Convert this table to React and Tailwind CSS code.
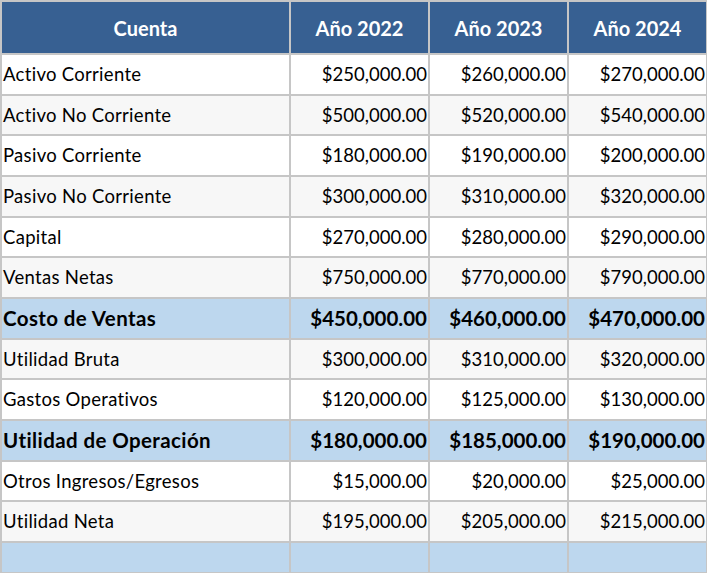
import React from "react";

const rows = [
  ["Activo Corriente", "$250,000.00", "$260,000.00", "$270,000.00"],
  ["Activo No Corriente", "$500,000.00", "$520,000.00", "$540,000.00"],
  ["Pasivo Corriente", "$180,000.00", "$190,000.00", "$200,000.00"],
  ["Pasivo No Corriente", "$300,000.00", "$310,000.00", "$320,000.00"],
  ["Capital", "$270,000.00", "$280,000.00", "$290,000.00"],
  ["Ventas Netas", "$750,000.00", "$770,000.00", "$790,000.00"],
  ["Costo de Ventas", "$450,000.00", "$460,000.00", "$470,000.00", true],
  ["Utilidad Bruta", "$300,000.00", "$310,000.00", "$320,000.00"],
  ["Gastos Operativos", "$120,000.00", "$125,000.00", "$130,000.00"],
  ["Utilidad de Operación", "$180,000.00", "$185,000.00", "$190,000.00", true],
  ["Otros Ingresos/Egresos", "$15,000.00", "$20,000.00", "$25,000.00"],
  ["Utilidad Neta", "$195,000.00", "$205,000.00", "$215,000.00"],
];

const App = () => {
  return (
    <div className="bg-white font-['Lato',sans-serif] text-black">
      <table className="w-[707px] border-collapse table-fixed">
        <colgroup>
          <col className="w-[289px]" />
          <col className="w-[139px]" />
          <col className="w-[139px]" />
          <col className="w-[139px]" />
        </colgroup>
        <thead>
          <tr className="h-[53px] bg-[#376092] text-white text-[20px] font-bold">
            <th className="border-2 border-[#c6c6c6] text-center">Cuenta</th>
            <th className="border-2 border-[#c6c6c6] text-center">Año 2022</th>
            <th className="border-2 border-[#c6c6c6] text-center">Año 2023</th>
            <th className="border-2 border-[#c6c6c6] text-center">Año 2024</th>
          </tr>
        </thead>
        <tbody>
          {rows.map(([name, a, b, c, bold], i) => (
            <tr
              key={name}
              className={
                bold
                  ? "h-[40.67px] bg-[#bdd7ee] text-[20.5px] font-bold"
                  : i % 2 === 1
                  ? "h-[40.67px] bg-[#f7f7f7] text-[18.5px]"
                  : "h-[40.67px] bg-white text-[18.5px]"
              }
            >
              <td
                className={
                  bold
                    ? "border-2 border-[#c6c6c6] pl-[1px] pt-[1px] text-left whitespace-nowrap tracking-[0.4px]"
                    : "border-2 border-[#c6c6c6] pl-[1px] pt-[1px] text-left whitespace-nowrap tracking-[0.3px]"
                }
              >
                {name}
              </td>
              <td className="border-2 border-[#c6c6c6] pr-[1px] pt-[1px] text-right whitespace-nowrap">{a}</td>
              <td className="border-2 border-[#c6c6c6] pr-[1px] pt-[1px] text-right whitespace-nowrap">{b}</td>
              <td className="border-2 border-[#c6c6c6] pr-[1px] pt-[1px] text-right whitespace-nowrap">{c}</td>
            </tr>
          ))}
          <tr className="h-[31px] bg-[#bdd7ee]">
            <td className="border-2 border-[#c6c6c6]"></td>
            <td className="border-2 border-[#c6c6c6]"></td>
            <td className="border-2 border-[#c6c6c6]"></td>
            <td className="border-2 border-[#c6c6c6]"></td>
          </tr>
        </tbody>
      </table>
    </div>
  );
};

export default App;
